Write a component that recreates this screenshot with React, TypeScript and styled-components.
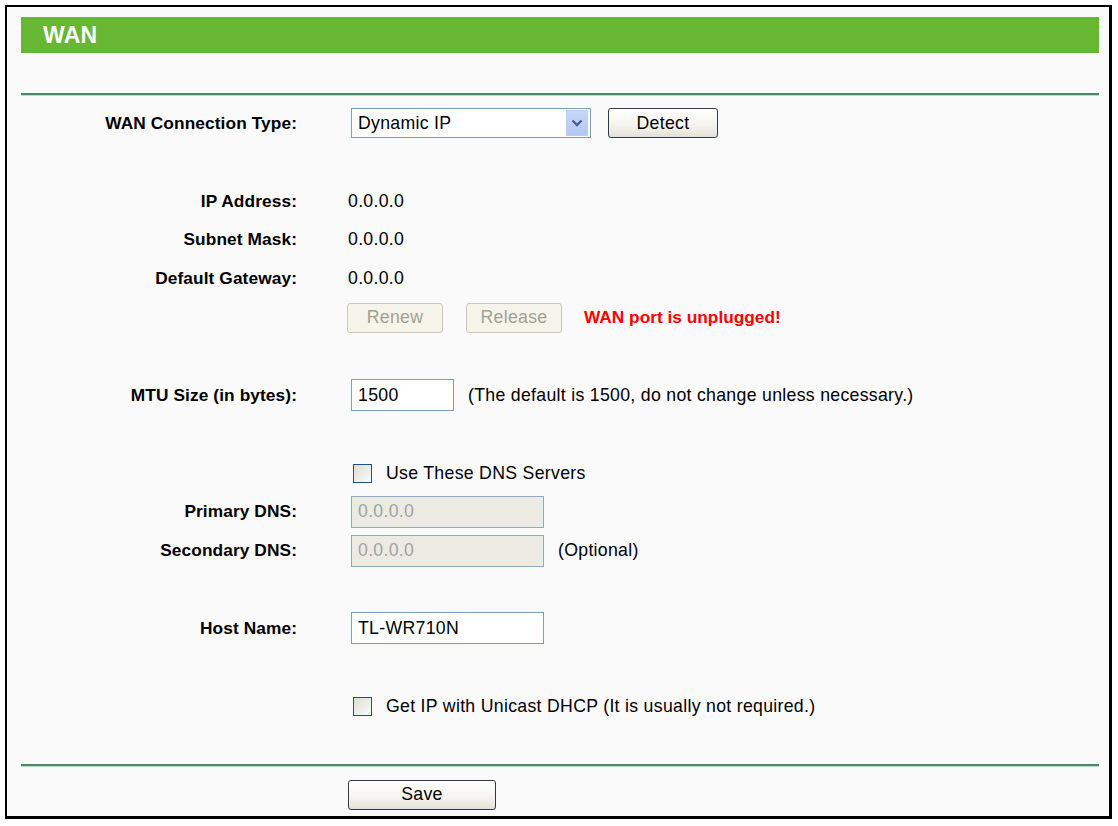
import React from "react";
import styled, { createGlobalStyle, css } from "styled-components";

const GlobalStyle = createGlobalStyle`
  html, body { margin: 0; padding: 0; background: #ffffff; }
  body {
    font-family: "Liberation Sans", Arial, Helvetica, sans-serif;
    font-size: 17.7px;
    letter-spacing: 0.3px;
    color: #000;
  }
  * { box-sizing: border-box; }
`;

const Frame = styled.div`
  margin: 5px 0 0 5px;
  width: 1107px;
  height: 814px;
  border: 2px solid #000;
  border-right-width: 3px;
  border-bottom-width: 3px;
  background: #fafafa;
  padding: 10px 10px 0 14px;
  overflow: hidden;
`;

const TitleBar = styled.div`
  height: 36px;
  background: #67b734;
  display: flex;
  align-items: center;
  padding-left: 22px;
`;

const TitleText = styled.h1`
  margin: 0;
  color: #fff;
  font-size: 23px;
  font-weight: bold;
  letter-spacing: 0.2px;
`;

const Divider = styled.div<{ $gapTop: number; $gapBottom: number }>`
  height: 3px;
  margin-top: ${(p) => p.$gapTop}px;
  margin-bottom: ${(p) => p.$gapBottom}px;
  background: linear-gradient(#4b8867 0, #4b8867 2px, #b9dcc6 2px, #b9dcc6 3px);
`;

const FormGrid = styled.div`
  display: grid;
  grid-template-columns: 276px 1fr;
  column-gap: 51px;
  grid-auto-rows: 38.85px;
  align-items: center;
`;

const Label = styled.div`
  grid-column: 1;
  text-align: right;
  font-weight: bold;
  font-size: 17.3px;
  letter-spacing: 0.1px;
  white-space: nowrap;
`;

const Value = styled.div<{ $shift?: number }>`
  grid-column: 2;
  display: flex;
  align-items: center;
  white-space: nowrap;
  margin-left: ${(p) => p.$shift ?? 0}px;
`;

const SpacerRow = styled.div`
  grid-column: 1 / span 2;
`;

const TextInput = styled.input<{ $width: number }>`
  width: ${(p) => p.$width}px;
  height: 32px;
  margin: 0 0 0 3px;
  padding: 0 0 0 6px;
  border: 1px solid #7f9db9;
  background: #fff;
  font-family: inherit;
  font-size: 17.7px;
  letter-spacing: 0.3px;
  color: #000;
  outline: none;
  &:disabled {
    background: #ebeae3;
    color: #a3a3a3;
    border-color: #8fa8c4;
  }
`;

const SelectWrap = styled.div`
  width: 240px;
  height: 30px;
  margin-left: 3px;
  border: 1px solid #7f9db9;
  background: #fff;
  display: flex;
  align-items: stretch;
  padding: 1px 2px 1px 0;
`;

const NativeSelect = styled.select`
  flex: 1;
  appearance: none;
  -webkit-appearance: none;
  border: none;
  background: transparent;
  font-family: inherit;
  font-size: 17.7px;
  letter-spacing: 0.3px;
  padding: 0 0 0 6px;
  color: #000;
  outline: none;
`;

const ArrowBox = styled.div`
  width: 22px;
  background: linear-gradient(#c8d8fb, #b3c8f6);
  border: 1px solid #bccef5;
  display: flex;
  align-items: center;
  justify-content: center;
`;

const Button = styled.button<{ $width: number; $gapLeft?: number }>`
  width: ${(p) => p.$width}px;
  height: 30px;
  margin-left: ${(p) => p.$gapLeft ?? 0}px;
  border-radius: 3px;
  font-family: inherit;
  font-size: 17.7px;
  letter-spacing: 0.3px;
  padding: 0;
  ${(p) =>
    p.disabled
      ? css`
          border: 1px solid #cac8bb;
          background: #f5f4ea;
          color: #a1a192;
        `
      : css`
          border: 1px solid #2f3a4a;
          background: linear-gradient(#ffffff, #f4f3ee 60%, #e4e1d6);
          color: #000;
        `}
`;

const ButtonGroup = styled.div`
  display: flex;
  align-items: center;
  gap: 23px;
`;

const ErrorText = styled.span`
  color: #ff0000;
  font-weight: bold;
  font-size: 17.3px;
  letter-spacing: 0;
  margin-left: -1px;
`;

const Hint = styled.span`
  margin-left: 14px;
`;

const CheckLabel = styled.label`
  display: flex;
  align-items: center;
  gap: 14px;
  margin-left: 5px;
`;

const CheckBox = styled.input.attrs({ type: "checkbox" })`
  appearance: none;
  -webkit-appearance: none;
  width: 19px;
  height: 19px;
  margin: 0;
  border: 1px solid #1c5180;
  background: linear-gradient(135deg, #dcdcd7, #fbfbf9);
`;

const SaveRow = styled.div`
  padding-left: 327px;
`;

const Chevron = () => (
  <svg width="12" height="8" viewBox="0 0 12 8">
    <path d="M1.5 1.5 L6 6 L10.5 1.5" fill="none" stroke="#4d6185" strokeWidth="2.4" />
  </svg>
);

export default function App() {
  return (
    <>
      <GlobalStyle />
      <Frame>
        <TitleBar>
          <TitleText>WAN</TitleText>
        </TitleBar>
        <Divider $gapTop={40} $gapBottom={8} />
        <FormGrid>
          <Label>WAN Connection Type:</Label>
          <Value>
            <SelectWrap>
              <NativeSelect defaultValue="dynamic">
                <option value="dynamic">Dynamic IP</option>
                <option value="static">Static IP</option>
                <option value="pppoe">PPPoE</option>
              </NativeSelect>
              <ArrowBox>
                <Chevron />
              </ArrowBox>
            </SelectWrap>
            <Button $width={110} $gapLeft={17}>Detect</Button>
          </Value>

          <SpacerRow />

          <Label>IP Address:</Label>
          <Value>0.0.0.0</Value>

          <Label>Subnet Mask:</Label>
          <Value>0.0.0.0</Value>

          <Label>Default Gateway:</Label>
          <Value>0.0.0.0</Value>

          <Value $shift={-1}>
            <ButtonGroup>
              <Button $width={96} disabled>Renew</Button>
              <Button $width={96} disabled>Release</Button>
              <ErrorText>WAN port is unplugged!</ErrorText>
            </ButtonGroup>
          </Value>

          <SpacerRow />

          <Label>MTU Size (in bytes):</Label>
          <Value>
            <TextInput $width={103} defaultValue="1500" />
            <Hint>(The default is 1500, do not change unless necessary.)</Hint>
          </Value>

          <SpacerRow />

          <Value>
            <CheckLabel>
              <CheckBox />
              <span>Use These DNS Servers</span>
            </CheckLabel>
          </Value>

          <Label>Primary DNS:</Label>
          <Value>
            <TextInput $width={193} value="0.0.0.0" disabled readOnly />
          </Value>

          <Label>Secondary DNS:</Label>
          <Value>
            <TextInput $width={193} value="0.0.0.0" disabled readOnly />
            <Hint>(Optional)</Hint>
          </Value>

          <SpacerRow />

          <Label>Host Name:</Label>
          <Value>
            <TextInput $width={193} defaultValue="TL-WR710N" />
          </Value>

          <SpacerRow />

          <Value>
            <CheckLabel>
              <CheckBox />
              <span>Get IP with Unicast DHCP (It is usually not required.)</span>
            </CheckLabel>
          </Value>
        </FormGrid>
        <Divider $gapTop={38} $gapBottom={13} />
        <SaveRow>
          <Button $width={148}>Save</Button>
        </SaveRow>
      </Frame>
    </>
  );
}
